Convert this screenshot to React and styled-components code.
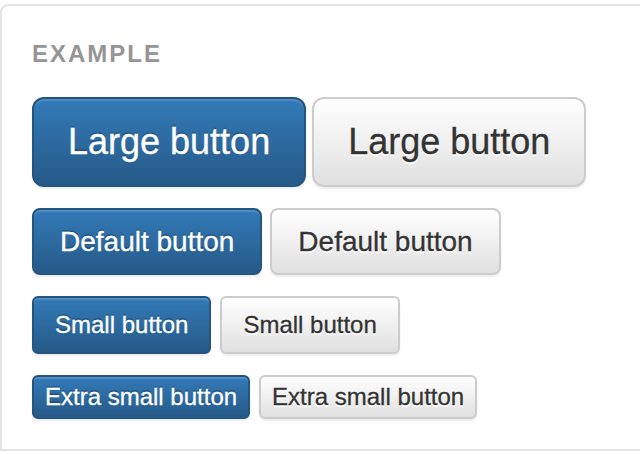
import React from 'react';
import styled, { createGlobalStyle, css } from 'styled-components';

const GlobalStyle = createGlobalStyle`
  html, body {
    margin: 0;
    padding: 0;
    background: #fff;
    overflow: hidden;
  }
  body {
    font-family: "Liberation Sans", Arial, sans-serif;
  }
`

const Example = styled.div`
  margin-top: 4px;
  width: calc(100% + 20px);
  box-sizing: border-box;
  border: 2px solid #e3e3e3;
  border-radius: 8px 8px 0 0;
  padding: 36px 30px 30px;
  display: flex;
  flex-direction: column;
`

const Label = styled.div`
  font-size: 24px;
  line-height: 24px;
  font-weight: 700;
  color: #959595;
  text-transform: uppercase;
  letter-spacing: 2px;
  margin-bottom: 31px;
`

const Rows = styled.div`
  display: flex;
  flex-direction: column;
  gap: 21px;
`

const Row = styled.div`
  display: flex;
  align-items: flex-start;
  gap: ${p => p.$gap}px;
`

const sizes = {
  lg: css`
    font-size: 36px;
    line-height: 48px;
    padding: 19px 34px;
    border-radius: 12px;
  `,
  md: css`
    font-size: 28px;
    line-height: 40px;
    padding: 12px 26px 11px;
    border-radius: 8px;
  `,
  sm: css`
    font-size: 24px;
    line-height: 36px;
    padding: 9px 21px;
    border-radius: 6px;
  `,
  xs: css`
    font-size: 24px;
    line-height: 36px;
    padding: 2px 11px 2px;
    border-radius: 6px;
  `,
}

const Button = styled.button`
  font-family: "Liberation Sans", Arial, sans-serif;
  font-weight: 400;
  border-width: 2px;
  border-style: solid;
  cursor: pointer;
  white-space: nowrap;
  -webkit-text-stroke: 0.3px currentColor;
  box-shadow: inset 0 2px 0 rgba(255, 255, 255, 0.15), 0 2px 2px rgba(0, 0, 0, 0.075);
  ${p => sizes[p.$size]}
  ${p => p.$primary ? css`
    color: #fff;
    background: linear-gradient(to bottom, #337ab7 0%, #265a88 100%);
    border-color: #245580;
    text-shadow: 0 -2px 0 rgba(0, 0, 0, 0.2);
  ` : css`
    color: #333;
    background: linear-gradient(to bottom, #fff 0%, #e0e0e0 100%);
    border-color: #ccc;
    text-shadow: 0 2px 0 #fff;
  `}
`

const rows = [
  { size: 'lg', text: 'Large button', gap: 6 },
  { size: 'md', text: 'Default button', gap: 8 },
  { size: 'sm', text: 'Small button', gap: 9 },
  { size: 'xs', text: 'Extra small button', gap: 9 },
]

export default function App() {
  return (
    <>
      <GlobalStyle />
      <Example>
        <Label>Example</Label>
        <Rows>
          {rows.map(r => (
            <Row key={r.size} $gap={r.gap}>
              <Button $size={r.size} $primary>{r.text}</Button>
              <Button $size={r.size}>{r.text}</Button>
            </Row>
          ))}
        </Rows>
      </Example>
    </>
  )
}
